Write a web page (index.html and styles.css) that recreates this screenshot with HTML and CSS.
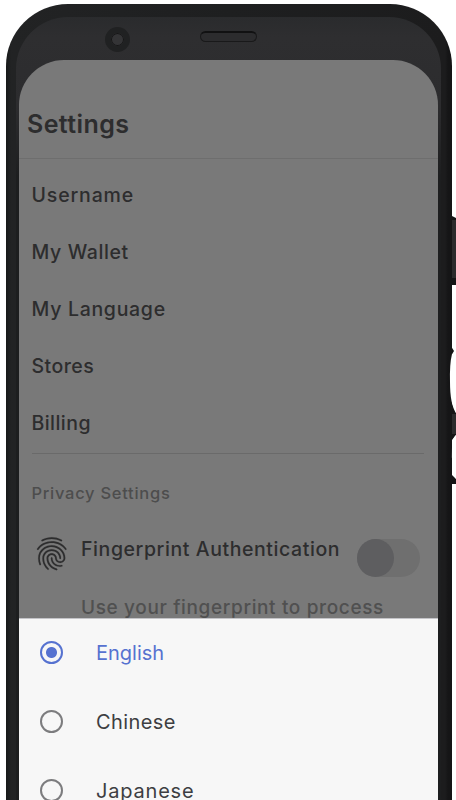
FILE: index.html
```
<!DOCTYPE html>
<html lang="en">
<head>
<meta charset="utf-8">
<title>Settings</title>
<link rel="stylesheet" href="styles.css">
</head>
<body>
<div class="stage">
  <svg class="buttons" width="12" height="290" viewBox="444 210 12 290" aria-hidden="true">
    <path fill="#151516" d="M450 216H452L456 218V285H450Z"/>
    <path fill="#2b2b2c" d="M452 220H456V278H452Z"/>
    <path fill="#151516" d="M449 347H451.500L454 351L451 356V400L456 413V435L452 440V475L456 479V484H449Z"/>
    <path fill="#2b2b2c" d="M452 414H456V434H452Z"/>
    <path fill="#fff" d="M452 354Q449.500 364 450 382Q450 404 456 413V354ZM456 435Q452 438 452 447Q451 468 456 479Z"/>
  </svg>
  <div class="phone">
    <div class="bezel">
      <div class="sensors">
        <span class="camera"></span>
        <span class="speaker"></span>
      </div>
      <main class="screen">
        <h1 class="title"><span class="t-title">Settings</span></h1>
        <ul class="menu">
          <li><span class="t-user">Username</span></li>
          <li><span class="t-wallet">My Wallet</span></li>
          <li><span class="t-lang">My Language</span></li>
          <li><span class="t-stores">Stores</span></li>
          <li><span class="t-bill">Billing</span></li>
        </ul>
        <h2 class="section"><span class="t-priv">Privacy Settings</span></h2>
        <div class="auth">
          <svg class="finger" viewBox="0 0 24 24" aria-hidden="true"><path d="M17.81 4.47c-.08 0-.16-.02-.23-.06C15.66 3.42 14 3 12.01 3c-1.98 0-3.86.47-5.57 1.41-.24.13-.54.04-.68-.2-.13-.24-.04-.55.2-.68C7.82 2.52 9.86 2 12.01 2c2.13 0 3.99.47 6.03 1.52.25.13.34.43.21.67-.09.18-.26.28-.44.28zM3.5 9.72c-.1 0-.2-.03-.29-.09-.23-.16-.28-.47-.12-.7.99-1.4 2.25-2.5 3.75-3.27C9.98 4.04 14 4.03 17.15 5.65c1.5.77 2.76 1.86 3.75 3.25.16.22.11.54-.12.7-.23.16-.54.11-.7-.12-.9-1.26-2.04-2.25-3.39-2.94-2.87-1.47-6.54-1.47-9.4.01-1.36.7-2.5 1.7-3.4 2.96-.08.14-.23.21-.39.21zm6.25 12.07c-.13 0-.26-.05-.35-.15-.87-.87-1.34-1.43-2.01-2.64-.69-1.23-1.05-2.73-1.05-4.34 0-2.97 2.54-5.39 5.66-5.39s5.66 2.42 5.66 5.39c0 .28-.22.5-.5.5s-.5-.22-.5-.5c0-2.42-2.09-4.39-4.66-4.39-2.57 0-4.66 1.97-4.66 4.39 0 1.44.32 2.77.93 3.85.64 1.15 1.08 1.64 1.85 2.42.19.2.19.51 0 .71-.11.1-.24.15-.37.15zm7.17-1.85c-1.19 0-2.24-.3-3.1-.89-1.49-1.01-2.38-2.65-2.38-4.39 0-.28.22-.5.5-.5s.5.22.5.5c0 1.41.72 2.74 1.94 3.56.71.48 1.54.71 2.54.71.24 0 .64-.03 1.04-.1.27-.05.53.13.58.41.05.27-.13.53-.41.58-.57.11-1.07.12-1.21.12zM14.91 22c-.04 0-.09-.01-.13-.02-1.59-.44-2.63-1.03-3.72-2.1-1.4-1.39-2.17-3.24-2.17-5.22 0-1.62 1.38-2.94 3.08-2.94 1.7 0 3.08 1.32 3.08 2.94 0 1.07.93 1.94 2.08 1.94s2.08-.87 2.08-1.94c0-3.77-3.25-6.83-7.25-6.83-2.84 0-5.44 1.58-6.61 4.03-.39.81-.59 1.76-.59 2.8 0 .78.07 2.01.67 3.61.1.26-.03.55-.29.64-.26.1-.55-.04-.64-.29-.49-1.31-.73-2.61-.73-3.96 0-1.2.23-2.29.68-3.24 1.33-2.79 4.28-4.6 7.51-4.6 4.55 0 8.25 3.51 8.25 7.83 0 1.62-1.38 2.94-3.08 2.94s-3.08-1.32-3.08-2.94c0-1.07-.93-1.94-2.08-1.94s-2.08.87-2.08 1.94c0 1.71.66 3.31 1.87 4.51.95.94 1.86 1.46 3.27 1.85.27.07.42.35.35.61-.05.23-.26.38-.47.38z"/></svg>
          <div class="auth-text">
            <div class="auth-name"><span class="t-auth">Fingerprint Authentication</span></div>
            <div class="auth-hint"><span class="t-hint">Use your fingerprint to process</span></div>
          </div>
          <span class="toggle"><span class="knob"></span></span>
        </div>
        <div class="sheet">
          <div class="option selected"><span class="radio"></span><span class="t-en">English</span></div>
          <div class="option"><span class="radio"></span><span class="t-zh">Chinese</span></div>
          <div class="option"><span class="radio"></span><span class="t-ja">Japanese</span></div>
        </div>
      </main>
    </div>
  </div>
</div>
</body>
</html>
```
FILE: styles.css
```
* { box-sizing: border-box; }
body { margin: 0; background: #fff; font-family: Inter, "Open Sans", sans-serif; }
.stage { position: relative; width: 456px; height: 800px; overflow: hidden; padding: 4px 4px 0 5.5px; }
.buttons { position: absolute; z-index: 1; left: 444px; top: 210px; }
.phone {
  position: relative; height: 810px; padding: 13px 11px 0 10px;
  border-radius: 62px 62px 0 0;
  background: linear-gradient(90deg, #171818 0, #222324 5px, #1e1f20 50%, #1c1c1d 439px, #151516 442px);
}
.bezel {
  height: 797px; padding: 0 3px; border-radius: 52px 52px 0 0;
  background: linear-gradient(180deg, #2a2b2d 0, #2e2e30 20px, #2c2c2e 90px, #1d1e1f 160px);
}
.sensors { height: 42.5px; display: flex; align-items: flex-start; }
.camera {
  width: 25px; height: 25px; margin: 10px 0 0 86px; border-radius: 50%;
  border: 6px solid #202122; background: #343436; box-shadow: inset 0 0 0 1px #171718;
}
.speaker {
  width: 57px; height: 11px; margin: 14px 0 0 70.5px; border-radius: 6px;
  border: 1px solid #19191a; border-top: 2px solid #111112; background: #2c2c2e;
}
.screen { height: 755px; border-radius: 45px 45px 0 0; background: #797979; color: #2d2d2e; overflow: hidden; }
.screen span { white-space: nowrap; }
.title {
  height: 99.5px; margin: 0; padding: 45px 0 0 8.5px; border-bottom: 1px solid #6e6e6e;
  font-size: 25px; line-height: 38px; font-weight: 600;
}
.menu {
  list-style: none; margin: 0 14px 0 13px; padding: 8px 0 1px; height: 295px;
  border-bottom: 1.5px solid #6a6a6a; font-size: 19.5px; font-weight: 500;
}
.menu li { height: 57px; line-height: 57px; }
.section { margin: 0; height: 79px; padding: 25px 0 0 13px; font-size: 16.5px; line-height: 29px; font-weight: 500; color: #4d4d4d; }
.auth { display: flex; height: 85px; padding-left: 13px; }
.finger { width: 39.5px; height: 39.5px; margin-top: .5px; fill: #2d2d2e; stroke: #2d2d2e; stroke-width: .1; flex: none; }
.auth-text { margin-left: 10px; width: 276px; font-size: 19.5px; font-weight: 500; flex: none; }
.auth-name { height: 32px; line-height: 33px; }
.auth-hint { height: 53px; padding-top: 27px; line-height: 31px; color: #505050; font-size: 19px; }
.toggle { width: 63px; height: 38px; margin-top: 5.5px; border-radius: 19px; background: #6f6f6f; flex: none; }
.knob { display: block; width: 37px; height: 38px; border-radius: 50%; background: #5e5e60; }
.sheet { position: relative; background: #f7f7f7; height: 200px; border-top: 1px solid #c4c4c8; color: #3d3e42; font-size: 20px; }
.option { position: relative; top: -1px; display: flex; align-items: center; height: 69px; padding-left: 21.5px; gap: 33px; }
.radio { width: 23px; height: 23px; border: 2.5px solid #7c7c7e; border-radius: 50%; flex: none; }
.selected { color: #5672d0; }
.selected .radio { border-color: #5672d0; background: radial-gradient(circle, #5672d0 5px, transparent 6px); }

/* tracking */
.t-title { letter-spacing: .4px; }
.t-user { letter-spacing: .85px; }
.t-wallet { letter-spacing: .6px; }
.t-lang { letter-spacing: .7px; }
.t-stores { letter-spacing: .45px; }
.t-bill { letter-spacing: .45px; }
.t-priv { letter-spacing: .72px; }
.t-auth { letter-spacing: .58px; }
.t-hint { letter-spacing: .64px; }
.t-zh { letter-spacing: .4px; }
.t-ja { letter-spacing: .8px; }
```
